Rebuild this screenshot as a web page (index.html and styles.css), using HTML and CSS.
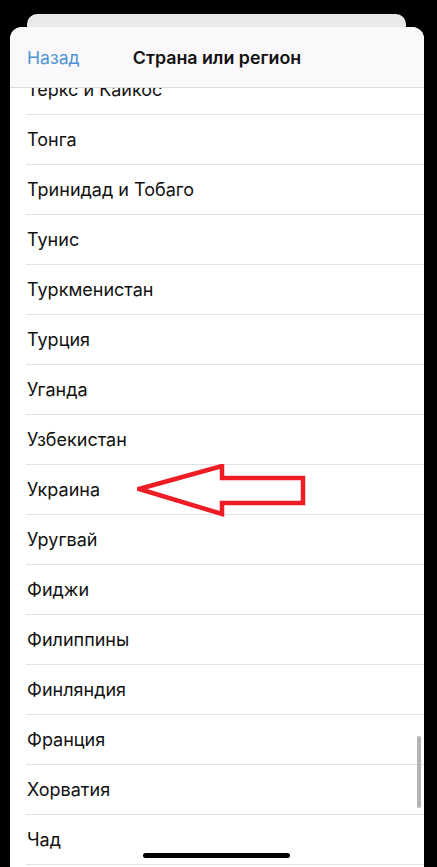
FILE: index.html
```html
<!DOCTYPE html>
<html lang="ru">
<head>
    <meta charset="UTF-8">
    <meta name="viewport" content="width=device-width, initial-scale=1.0">
    <title>Страна или регион</title>
    <link rel="stylesheet" href="styles.css">
</head>
<body>
    <div class="back-card"></div>
    <div class="sheet">
        <div class="header">
            <a class="back" href="#">Назад</a>
            <div class="title">Страна или регион</div>
            <span></span>
        </div>
        <div class="list-wrap">
            <ul class="list">
                <li>Теркс и Кайкос</li>
                <li>Тонга</li>
                <li>Тринидад и Тобаго</li>
                <li>Тунис</li>
                <li>Туркменистан</li>
                <li>Турция</li>
                <li>Уганда</li>
                <li>Узбекистан</li>
                <li>Украина</li>
                <li>Уругвай</li>
                <li>Фиджи</li>
                <li>Филиппины</li>
                <li>Финляндия</li>
                <li>Франция</li>
                <li>Хорватия</li>
                <li>Чад</li>
            </ul>
            <div class="scrollbar"></div>
        </div>
        <svg class="arrow" width="180" height="60" viewBox="0 0 180 60">
            <polygon points="2,25 85,2 85,14 166,14 166,39 85,39 85,50" fill="none" stroke="#ee1d25" stroke-width="4.5" stroke-linejoin="miter"/>
        </svg>
        <div class="home-bar"></div>
    </div>
</body>
</html>
```

FILE: styles.css
```css
body {
    margin: 0;
    height: 867px;
    overflow: hidden;
    background-color: #000;
    font-family: Inter, "Noto Sans", sans-serif;
}
.back-card {
    margin: 14px 31px 0 27px;
    height: 13px;
    background-color: #e9e8ea;
    border-radius: 10px 10px 0 0;
}
.sheet {
    position: relative;
    margin: 0 13px 0 10px;
    height: 840px;
    background-color: #fff;
    border-radius: 12px 12px 0 0;
    overflow: hidden;
    display: flex;
    flex-direction: column;
}
.header {
    height: 60px;
    flex-shrink: 0;
    display: grid;
    grid-template-columns: 1fr auto 1fr;
    align-items: center;
    padding: 0 17px;
    background-color: #faf8fa;
    border-bottom: 1px solid #dcdbdd;
}
.back {
    color: #4f94d4;
    text-decoration: none;
    font-size: 17.6px;
}
.title {
    font-size: 17.8px;
    font-weight: 600;
    color: #111;
}
.list-wrap {
    position: relative;
    flex: 1;
    overflow: hidden;
}
.list {
    list-style: none;
    margin: -23px 0 0 16px;
    padding: 0;
}
.list li {
    height: 49px;
    line-height: 49px;
    border-bottom: 1px solid #e3e3e5;
    font-size: 18px;
    color: #111;
    padding-left: 1px;
}
.scrollbar {
    position: absolute;
    right: 3px;
    top: 648px;
    width: 4px;
    height: 72px;
    border-radius: 2px;
    background-color: #b4b4b6;
}
.arrow {
    position: absolute;
    left: 127px;
    top: 437px;
}
.home-bar {
    position: absolute;
    left: 133px;
    bottom: 9px;
    width: 147px;
    height: 5px;
    border-radius: 3px;
    background-color: #000;
}
```
